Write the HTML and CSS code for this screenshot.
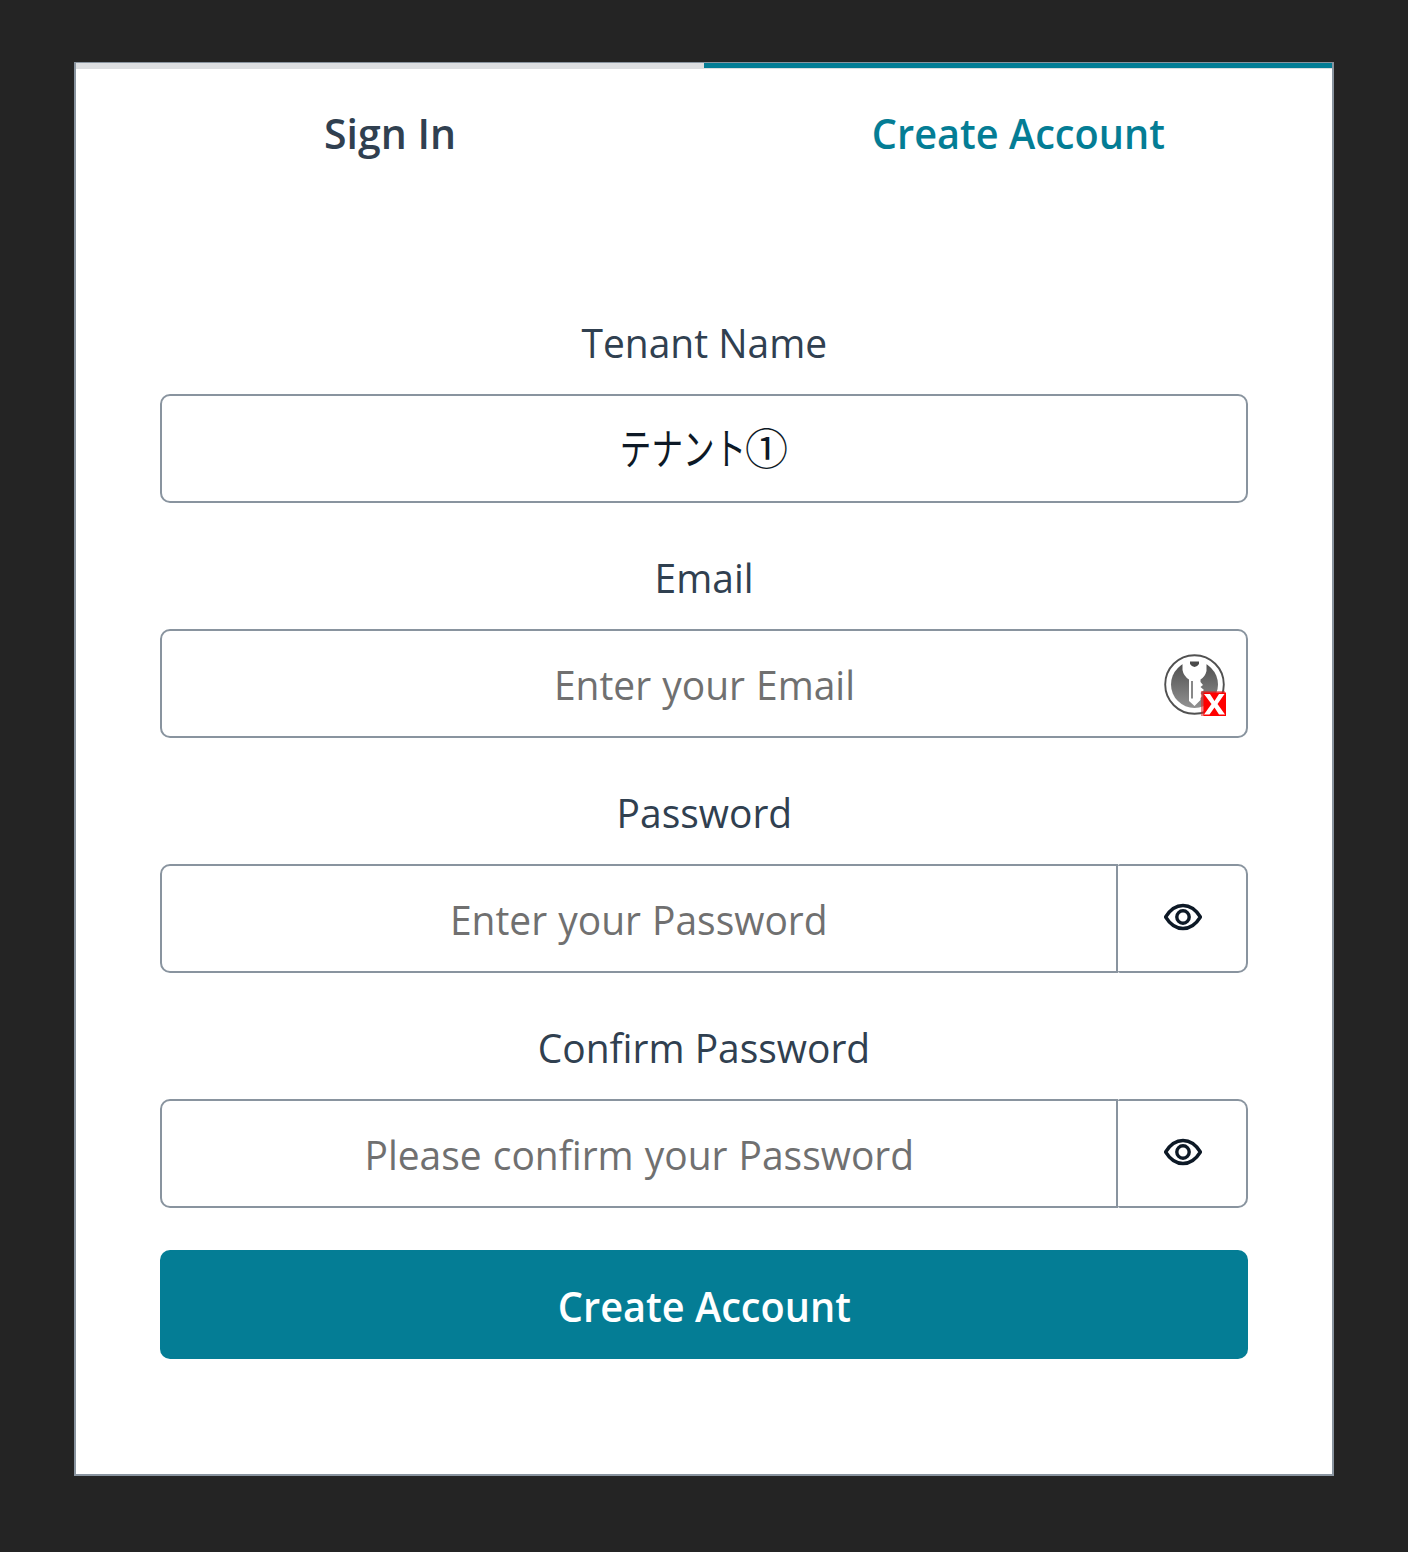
FILE: index.html
```html
<!DOCTYPE html>
<html lang="en">
<head>
<meta charset="utf-8">
<title>Create Account</title>
<link rel="stylesheet" href="styles.css">
</head>
<body>
<main class="card">
  <div class="tabs">
    <button class="tab"><span class="strong short">Sign In</span></button>
    <button class="tab active"><span class="strong">Create Account</span></button>
  </div>
  <form class="form">
    <div class="group">
      <label class="label">Tenant Name</label>
      <div class="field value"><span class="kana">テナント</span><span class="num">①</span></div>
    </div>
    <div class="group">
      <label class="label">Email</label>
      <div class="field">
        <span class="hint">Enter your Email</span>
        <svg class="keeper" viewBox="0 0 64 64">
          <defs><linearGradient id="disc" x1="0" y1="0" x2="0" y2="1"><stop offset="0" stop-color="#4b4b4b"/><stop offset="1" stop-color="#929292"/></linearGradient></defs>
          <circle cx="30.5" cy="30.5" r="29.3" fill="#fff" stroke="#515151" stroke-width="1.9"/>
          <circle cx="30.5" cy="30.5" r="23.500" fill="url(#disc)"/>
          <path d="M18.500 8Q22 6 26 6.500H35Q40 6 42.500 8V17Q41 23 36.500 25.500V28L39 31L36.500 33L40 36L36.500 39L38.500 42L36.500 44V46L30.500 52L25 47V25.500Q19.500 22 18.500 16Z" fill="#fff"/>
          <path d="M26 7.500H35V10Q33 13 30.500 13Q28 13 26 10Z" fill="#4b4b4b"/>
          <path d="M28 27V44.500" stroke="#606060" stroke-width="1.500"/>
          <path d="M37 37H61V62H37Z" fill="#d22" opacity=".55"/>
          <path d="M39.500 38.500H62V62H39.500Z" fill="#f00"/>
          <path d="M40 40H46L50.500 47L55 40H60.500L53.500 50L61 60.500H55L50.500 53.500L45.500 60.500H40L47.500 50Z" fill="#fff"/>
        </svg>
      </div>
    </div>
    <div class="group">
      <label class="label">Password</label>
      <div class="row">
        <div class="field joined"><span class="hint">Enter your Password</span></div>
        <button class="reveal" type="button" aria-label="Show password"><svg class="eye" viewBox="0 0 40 28"><path d="M2.600 14C7.500 6 13.500 2.500 20 2.500S32.500 6 37.400 14C32.500 22 26.500 25.500 20 25.500S7.500 22 2.600 14Z"/><circle cx="20" cy="14" r="6.200"/></svg></button>
      </div>
    </div>
    <div class="group">
      <label class="label">Confirm Password</label>
      <div class="row">
        <div class="field joined"><span class="hint">Please confirm your Password</span></div>
        <button class="reveal" type="button" aria-label="Show password"><svg class="eye" viewBox="0 0 40 28"><path d="M2.600 14C7.500 6 13.500 2.500 20 2.500S32.500 6 37.400 14C32.500 22 26.500 25.500 20 25.500S7.500 22 2.600 14Z"/><circle cx="20" cy="14" r="6.200"/></svg></button>
      </div>
    </div>
    <button class="submit" type="button"><span class="strong">Create Account</span></button>
  </form>
</main>
</body>
</html>
```
FILE: styles.css
```css
* { box-sizing: border-box; }
body {
  margin: 0;
  padding: 62px 74px 76px;
  background: #242424;
  color: #304050;
  font: 400 41px/62px "Open Sans", "Noto Sans CJK JP", sans-serif;
}
button { font: inherit; color: inherit; margin: 0; padding: 0; border: 0; background: none; }
.card {
  height: 1414px;
  background: #fff;
  border: 2px solid #89949f;
  border-top-width: 1px;
}
.tabs { display: grid; grid-template-columns: 1fr 1fr; height: 111px; }
.tab {
  border-top: 6px solid #dcdee0;
  padding-top: 23px;
  font-weight: 600;
  display: flex;
  align-items: center;
  justify-content: center;
}
.tab.active { color: #047d95; border-top: 5px solid #047d95; padding-top: 24px; box-shadow: inset 0 1px #dcdee0; }
.form { padding: 136px 84px 0; }
.group { display: flex; flex-direction: column; height: 235px; align-items: center; }
.label { display: block; height: 84px; line-height: 64px; white-space: nowrap; transform: scaleX(.95); }
.field, .reveal {
  height: 109px;
  border: 2px solid #89949f;
  border-radius: 10px;
  display: flex;
  align-items: center;
  justify-content: center;
}
.field { width: 100%; position: relative; white-space: nowrap; }
.row { display: flex; width: 100%; }
.joined { width: 958px; border-radius: 10px 0 0 10px; }
.reveal { width: 130px; border-left: 0; border-radius: 2px 10px 10px 2px; color: #0d1926; }
.hint { color: #707070; transform: scaleX(.95); padding-top: 1px; word-spacing: 1px; }
.strong { transform: scaleX(.968); }
.strong.short { transform: scaleX(1); }
.value { color: #0d1926; font-family: "Noto Sans CJK JP", sans-serif; padding-bottom: 5px; }
.kana { transform: scale(.77, 1.06); margin: 0 -19px; }
.num { font-size: 43px; margin-left: -1px; }
.keeper { position: absolute; right: 18px; top: 23px; width: 64px; height: 64px; }
.eye { width: 40px; height: 28px; margin: 0 0 4px 2px; fill: none; stroke: currentColor; stroke-width: 3.4; stroke-linejoin: round; }
.submit {
  width: 100%;
  height: 109px;
  border-radius: 10px;
  background: #047d95;
  color: #fff;
  font-weight: 600;
  padding-top: 2px;
  display: flex;
  align-items: center;
  justify-content: center;
}
```
